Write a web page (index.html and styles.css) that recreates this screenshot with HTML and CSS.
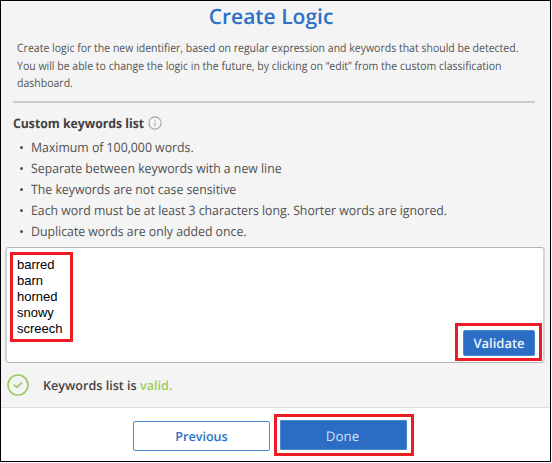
FILE: index.html
```html
<!DOCTYPE html>
<html lang="en">
<head>
<meta charset="utf-8">
<title>Create Logic</title>
<link rel="stylesheet" href="styles.css">
</head>
<body>
<main class="dialog">
  <section class="content">
    <h1 class="title">Create Logic</h1>
    <p class="intro">Create logic for the new identifier, based on regular expression and keywords that should be detected.<br>You will be able to change the logic in the future, by clicking on “edit” from the custom classification<br>dashboard.</p>
    <hr class="rule">
    <h2 class="heading"><span class="heading-text">Custom keywords list</span>
      <svg class="info" viewBox="0 0 14 14"><circle cx="7" cy="7" r="6.1"/><path d="M7 6.2v4M7 3.7v1.2"/></svg>
    </h2>
    <ul class="rules">
      <li><span>Maximum of 100,000 words.</span></li>
      <li><span>Separate between keywords with a new line</span></li>
      <li><span>The keywords are not case sensitive</span></li>
      <li><span>Each word must be at least 3 characters long. Shorter words are ignored.</span></li>
      <li><span>Duplicate words are only added once.</span></li>
    </ul>
    <div class="editor">
      <div class="mark words"><span>barred</span><span>barn</span><span>horned</span><span>snowy</span><span>screech</span></div>
      <div class="mark validate-mark"><button class="btn validate"><span>Validate</span></button></div>
    </div>
    <div class="status">
      <svg class="check" viewBox="0 0 22 22"><circle cx="11" cy="11" r="10"/><path d="M7.2 11l2.6 2.4 4.8-4.6"/></svg>
      <span class="status-text">Keywords list is <span class="valid">valid.</span></span>
    </div>
  </section>
  <footer class="footer">
    <button class="btn previous"><span>Previous</span></button>
    <div class="mark done-mark"><button class="btn done"><span>Done</span></button></div>
  </footer>
</main>
</body>
</html>
```
FILE: styles.css
```css
* { box-sizing: border-box; }
body { margin: 0; background: #fff; font-family: "Open Sans", "Noto Sans", sans-serif; color: #545454; overflow: hidden; text-rendering: geometricPrecision; }
.dialog { width: 551px; height: 462px; border: 1px solid #000; display: flex; flex-direction: column; background: #fff; }
.content { height: 407px; background: #f4f4f4; border-bottom: 1px solid #dedede; padding: 0 5px 0 4px; }
.title { margin: 0; padding: 0 8px 0 0; height: 38px; line-height: 33px; font-size: 21px; font-weight: 600; color: #2b71c7; text-align: center; }
.intro { margin: 0 0 0 12px; padding-top: 1px; height: 62px; font-size: 11.6px; line-height: 17.5px; white-space: nowrap; transform: scaleX(.907); transform-origin: 0 0; }
.rule { margin: 0 0 0 8px; height: 2px; border: 0; background: #cbcbcb; width: 522px; }
.heading { margin: 10px 0 0 8px; height: 24px; display: flex; align-items: flex-start; font-size: 13px; line-height: 21px; font-weight: 700; color: #404040; white-space: nowrap; }
.heading-text { width: 135px; transform: scaleX(.94); transform-origin: 0 0; }
.info { width: 14px; height: 14px; margin-top: 3px; fill: none; stroke: #a5a5a5; stroke-width: 1.1; }
.rules { margin: 0; padding: 0 0 0 14px; height: 110px; list-style: none; font-size: 13px; line-height: 21px; color: #505050; white-space: nowrap; }
.rules li { display: flex; align-items: center; }
.rules li::before { content: ""; width: 3px; height: 3px; border-radius: 50%; background: #505050; margin: 0 8px 0 1px; }
.rules span { transform: scaleX(.945); transform-origin: 0 0; }
.editor { height: 116px; border: 1px solid #b3b3b3; border-left: 2px solid #d0d0d0; border-right: 2px solid #d5d5d5; border-radius: 4px; background: #fff; display: flex; justify-content: space-between; align-items: flex-start; padding: 4px 1px 0 3px; }
.mark { border: 3px solid #ed1c24; }
.words { width: 63px; height: 90px; padding: 2px 0 0 4px; display: flex; flex-direction: column; font-family: "Liberation Sans", Arial, sans-serif; font-size: 13px; line-height: 16px; color: #000; text-rendering: auto; }
.validate-mark { width: 87px; height: 38px; margin-top: 71px; padding: 4px 4px 3px 5px; display: flex; }
.btn { margin: 0; padding: 0; border: 1px solid #4b86d0; background: #2b6cc4; color: #fff; font-family: inherit; font-size: 13px; font-weight: 600; border-radius: 2px; display: flex; justify-content: center; align-items: center; text-rendering: inherit; }
.validate { width: 72px; height: 26px; color: #eef4fb; }
.status { display: flex; align-items: center; height: 44px; padding-left: 2px; gap: 14px; }
.check { width: 22px; height: 22px; fill: none; stroke: #9aca60; stroke-width: 1.6; stroke-linecap: round; stroke-linejoin: round; }
.status-text { font-size: 12.6px; font-weight: 600; color: #444; white-space: nowrap; }
.valid { color: #9aca60; }
.footer { flex: 1; display: flex; align-items: flex-start; padding: 6px 0 0 132px; gap: 4px; }
.previous { width: 137px; height: 30px; margin-top: 7px; background: #fff; border-color: #4c8fd5; color: #2b71c7; font-size: 12.6px; }
.done-mark { width: 140px; height: 42px; padding: 3px; }
.done { width: 127px; height: 30px; color: #d0e0f4; font-weight: 500; font-size: 13.3px; border-radius: 1px; padding: 2px 2px 0 0; }
```
